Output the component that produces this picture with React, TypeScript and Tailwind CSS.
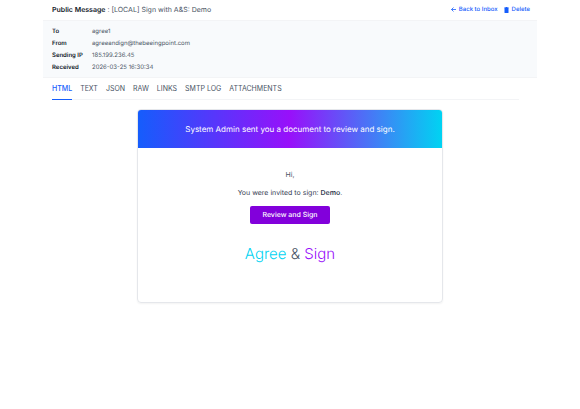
import React from 'react'

const details = [
  { label: 'To', value: 'agree1' },
  { label: 'From', value: 'agreeandign@thebeeingpoint.com' },
  { label: 'Sending IP', value: '185.199.236.45' },
  { label: 'Received', value: '2026-03-25 16:30:34' },
]

const tabs = ['HTML', 'TEXT', 'JSON', 'RAW', 'LINKS', 'SMTP LOG', 'ATTACHMENTS']

function BackIcon() {
  return (
    <svg className="size-[5px]" viewBox="0 0 10 10" fill="none" stroke="currentColor" strokeWidth="1.6" aria-hidden="true">
      <path d="M10 5H1M5 1L1 5l4 4" />
    </svg>
  )
}

function TrashIcon() {
  return (
    <svg className="h-[6px] w-[5px]" viewBox="0 0 10 12" fill="currentColor" aria-hidden="true">
      <path d="M3.5 0h3l.6 1H9.5v1.4H.5V1h2.4zM1 2.4h8V11q0 1-1 1H2q-1 0-1-1z" />
    </svg>
  )
}

export default function App() {
  return (
    <div className="min-h-screen bg-white font-['Inter','Liberation_Sans',sans-serif] text-gray-600 [text-rendering:geometricPrecision]">
      <div className="mx-auto max-w-[494px]">
        <header className="flex h-5 items-start justify-between pr-[7px] pl-[9px]">
          <h1 className="pt-1 text-[7px] leading-[11px]">
            <span className="font-semibold text-gray-900">Public Message</span> : [LOCAL] Sign with A&amp;S: Demo
          </h1>
          <nav className="flex gap-[6px] pt-1 text-[6px] leading-[11px] font-medium text-blue-600">
            <a href="#inbox" className="flex items-center gap-[3px]">
              <BackIcon />
              Back to Inbox
            </a>
            <a href="#delete" className="flex items-center gap-[3px]">
              <TrashIcon />
              Delete
            </a>
          </nav>
        </header>

        <dl className="border-y border-gray-100 bg-slate-50 px-[9px] pt-[5px] pb-[3px] text-[6px] leading-[12px]">
          {details.map((item) => (
            <div key={item.label} className="flex">
              <dt className="w-10 shrink-0 font-semibold text-gray-900">{item.label}</dt>
              <dd>{item.value}</dd>
            </div>
          ))}
        </dl>

        <main className="pr-[18px] pl-[9px]">
          <div role="tablist" className="flex gap-2 border-b border-gray-100 text-[7px] leading-[21px]">
            {tabs.map((tab, i) => (
              <button
                key={tab}
                type="button"
                role="tab"
                aria-selected={i === 0}
                className={i === 0 ? '-mb-px border-b border-blue-600 font-medium text-blue-600' : '-mb-px border-b border-transparent'}
              >
                {tab}
              </button>
            ))}
          </div>
        </main>

        <article className="mx-auto mt-[9px] w-[62%] overflow-hidden rounded-[4px] border border-gray-200 text-center shadow-xs">
          <h2 className="bg-linear-to-r/srgb from-[#155dfc] via-[#9810fa] to-[#00d3f2] py-3 text-[8px] leading-[14px] text-white">
            System Admin sent you a document to review and sign.
          </h2>
          <div className="pt-[22px] pb-[38px] text-[7px] leading-[10px]">
            <p>Hi,</p>
            <p className="mt-2 text-gray-700">
              You were invited to sign: <strong className="font-semibold">Demo</strong>.
            </p>
            <a href="#review" className="mt-2 inline-block rounded-[2px] bg-[#8200db] px-3 py-1 font-medium text-white">
              Review and Sign
            </a>
            <p className="mt-5 text-[15px] leading-[20px] font-light">
              <span className="text-[#00d3f2]">Agree</span> &amp; <span className="text-[#9810fa]">Sign</span>
            </p>
          </div>
        </article>
      </div>
    </div>
  )
}
